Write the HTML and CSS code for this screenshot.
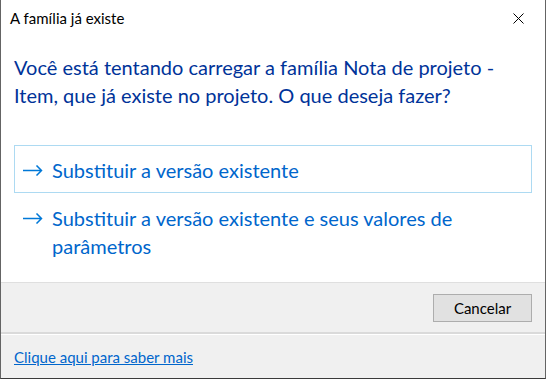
FILE: index.html
```html
<!DOCTYPE html>
<html lang="pt">
<head>
<meta charset="utf-8">
<link rel="stylesheet" href="styles.css">
</head>
<body>
<div class="window">
  <div class="titlebar">
    <span class="title">A família já existe</span>
    <svg class="close" width="11" height="11" viewBox="0 0 11 11"><path d="M0.5 0.5 L10.5 10.5 M10.5 0.5 L0.5 10.5" stroke="#000" stroke-width="1" fill="none"/></svg>
  </div>
  <div class="body">
    <p class="instruction">Você está tentando carregar a família Nota de projeto - Item, que já existe no projeto. O que deseja fazer?</p>
    <div class="links">
      <div class="cmd hover">
        <svg class="arrow" width="20" height="11" viewBox="0 0 20 11"><path d="M0 5.5 H18.5 M13.5 0.5 L18.5 5.5 L13.5 10.5" stroke="#0078d7" stroke-width="1.5" fill="none"/></svg>
        <span class="cmd-text">Substituir a versão existente</span>
      </div>
      <div class="cmd">
        <svg class="arrow" width="20" height="11" viewBox="0 0 20 11"><path d="M0 5.5 H18.5 M13.5 0.5 L18.5 5.5 L13.5 10.5" stroke="#0078d7" stroke-width="1.5" fill="none"/></svg>
        <span class="cmd-text">Substituir a versão existente e seus valores de parâmetros</span>
      </div>
    </div>
  </div>
  <div class="buttons">
    <button class="btn">Cancelar</button>
  </div>
  <div class="footer">
    <a class="more" href="#">Clique aqui para saber mais</a>
  </div>
</div>
</body>
</html>
```

FILE: styles.css
```css
html, body {
  margin: 0;
  padding: 0;
  background: #ffffff;
}
.window {
  width: 546px;
  height: 379px;
  box-sizing: border-box;
  border-left: 1px solid #646464;
  border-right: 1px solid #646464;
  border-bottom: 1px solid #3a3a3a;
  display: flex;
  flex-direction: column;
  font-family: Lato, "Noto Sans", sans-serif;
  background: #fff;
}
.titlebar {
  height: 36px;
  display: flex;
  align-items: center;
  justify-content: space-between;
  padding: 0 21px 0 9px;
  flex: none;
}
.title {
  font-size: 15px;
  line-height: 18px;
  color: #000;
}
.close {
  display: block;
  margin-top: 1px;
}
.body {
  flex: 1;
  padding: 17px 13px 0 13px;
}
.instruction {
  margin: 0;
  font-size: 20px;
  line-height: 28px;
  color: #003399;
  width: 500px;
}
.links {
  margin-top: 36px;
  display: flex;
  flex-direction: column;
}
.cmd {
  display: flex;
  align-items: flex-start;
  border: 1px solid transparent;
  padding: 10px 10px 8px 8px;
}
.cmd.hover {
  border-color: #addaf2;
}
.arrow {
  flex: none;
  margin-top: 9px;
  margin-right: 9px;
}
.cmd-text {
  font-size: 20px;
  line-height: 28px;
  color: #0066cc;
  max-width: 440px;
}
.buttons {
  flex: none;
  height: 49px;
  border-top: 1px solid #dfdfdf;
  border-bottom: 2px solid #dadada;
  background: #f0f0f0;
  display: flex;
  align-items: center;
  justify-content: flex-end;
  padding-right: 13px;
}
.btn {
  width: 99px;
  height: 28px;
  box-sizing: border-box;
  background: #e1e1e1;
  border: 1px solid #adadad;
  font-family: Lato, "Noto Sans", sans-serif;
  font-size: 15px;
  color: #000;
  padding: 0;
}
.footer {
  flex: none;
  height: 43px;
  border-top: 1px solid #ffffff;
  background: #f0f0f0;
  display: flex;
  align-items: center;
  padding-left: 13px;
}
.more {
  font-size: 15px;
  line-height: 18px;
  color: #0066cc;
  text-decoration: underline;
}
```
